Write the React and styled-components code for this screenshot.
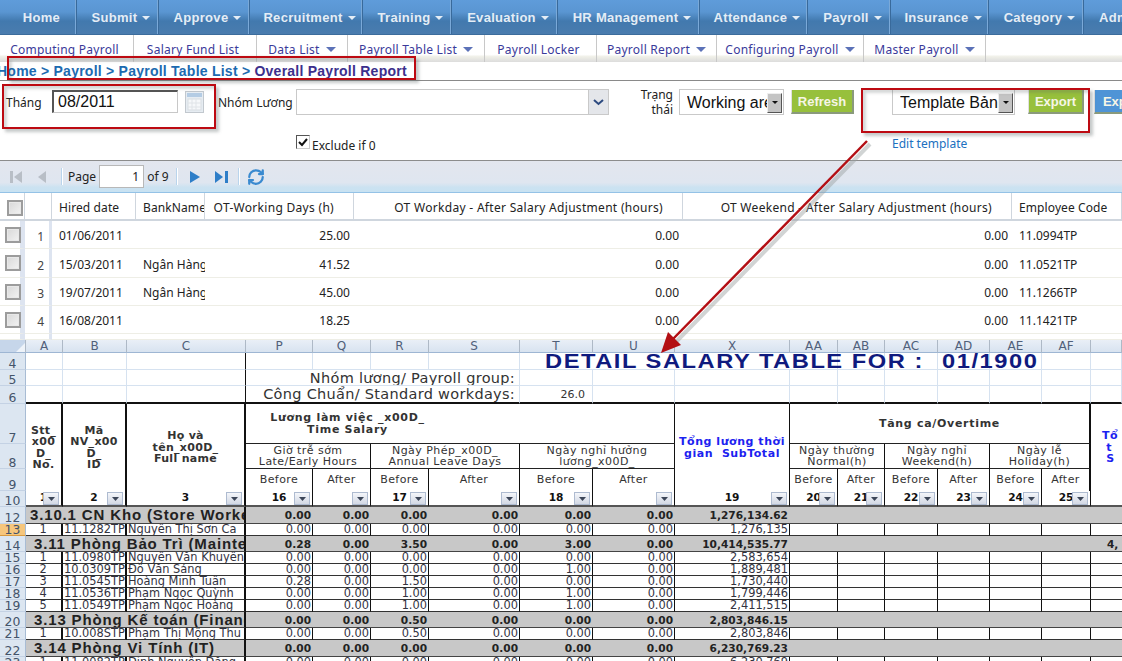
import React from "react";
import styled, { createGlobalStyle } from "styled-components";
import { RefreshCw } from "lucide-react";

const GlobalStyle = createGlobalStyle`
    html, body {
        margin: 0;
        padding: 0;
        background: #fff;
        overflow: hidden;
    }
    #root {
        width: 1122px;
        height: 661px;
    }
`;

const UI_FONT = `"Noto Sans", "Liberation Sans", sans-serif`;
const SHEET_FONT = `"DejaVu Sans", "Liberation Sans", sans-serif`;

const Page = styled.div`
    position: relative;
    width: 1122px;
    height: 661px;
    overflow: hidden;
    font-family: ${UI_FONT};
    font-size: 12px;
    color: #222;
`;

/////// top menus ///////
const Nav = styled.div`
    display: flex;
    height: 35px;
    overflow: hidden;
    background: linear-gradient(#5f9cda 0%, #5a96d2 35%, #4279ae 62%, #4a7cae 100%);
    border-bottom: 1px solid #3c6c9c;
    box-sizing: border-box;
`;

const NavItem = styled.div`
    flex: none;
    width: ${(p) => p.$w}px;
    box-sizing: border-box;
    display: flex;
    align-items: center;
    justify-content: center;
    gap: 5px;
    padding: 1px 0 0 7px;
    color: #e4edf6;
    font-family: "Liberation Sans", sans-serif;
    font-weight: bold;
    font-size: 13px;
    letter-spacing: 0.3px;
    white-space: nowrap;
    border-right: 1px solid #396a9b;
    box-shadow: inset -1px 0 0 #7aa9d8;
`;

const Caret = styled.i`
    display: block;
    width: 0;
    height: 0;
    border-left: ${(p) => p.$s || 4}px solid transparent;
    border-right: ${(p) => p.$s || 4}px solid transparent;
    border-top: ${(p) => p.$s || 4}px solid ${(p) => p.$c || "#e4edf6"};
`;

const SubNav = styled.div`
    display: flex;
    height: 27px;
    background: linear-gradient(#fff 0%, #fff 72%, #f0f0e8 80%, #dcdcdc 100%);
`;

const SubItem = styled.div`
    flex: none;
    width: ${(p) => p.$w}px;
    box-sizing: border-box;
    display: flex;
    align-items: center;
    justify-content: center;
    gap: 6px;
    padding: 1px ${(p) => (p.$menu ? 0 : 4)}px 0 0;
    color: #3a3a9a;
    font-size: 12px;
    letter-spacing: 0.25px;
    white-space: nowrap;
    border-right: 1px solid #c8c8c8;
`;

const Crumbs = styled.div`
    height: 18px;
    display: flex;
    align-items: center;
    margin-left: -3px;
    font-family: "Liberation Sans", sans-serif;
    font-weight: bold;
    font-size: 14px;
    letter-spacing: 0.24px;
    color: #1c6ab0;
    white-space: pre;
    border-bottom: 1px solid #8a8a8a;
    & b { color: #3c2f8c; }
`;

/////// filters ///////
const Filters = styled.div`
    height: 79px;
    border-bottom: 1px solid #8c8c8c;
    box-sizing: content-box;
`;

const FilterRow = styled.div`
    display: flex;
    align-items: flex-start;
    padding-top: 9px;
    height: 44px;
    box-sizing: border-box;
`;

const FilterLabel = styled.div`
    flex: none;
    width: ${(p) => p.$w}px;
    margin-left: ${(p) => p.$ml || 0}px;
    padding-top: 4px;
    white-space: nowrap;
    color: #222;
`;

const DateInput = styled.input`
    flex: none;
    width: 126px;
    height: 23px;
    box-sizing: border-box;
    padding: 0 4px;
    border: 1px solid #c8c8c8;
    border-top: 2px solid #555;
    border-left: 2px solid #555;
    font-family: "Liberation Sans", sans-serif;
    font-size: 16px;
    color: #111;
    outline: none;
`;

const CalendarIcon = styled.svg`
    flex: none;
    margin: 0 0 0 7px;
    display: block;
`;

const GroupSelect = styled.div`
    flex: none;
    width: 313px;
    height: 26px;
    margin-top: -1px;
    box-sizing: border-box;
    border: 1px solid #c9c9c9;
    display: flex;
    justify-content: flex-end;
`;

const GroupArrow = styled.div`
    width: 19px;
    background: #e4e6ea;
    border-left: 1px solid #c9c9c9;
    display: flex;
    align-items: center;
    justify-content: center;
`;

const StateLabel = styled.div`
    flex: none;
    width: 64px;
    box-sizing: border-box;
    padding-left: 24px;
    margin-top: -3px;
    text-align: right;
    line-height: 15px;
    font-size: 12px;
    color: #222;
`;

const PickSelect = styled.div`
    flex: none;
    width: ${(p) => p.$w}px;
    height: 26px;
    margin-left: ${(p) => p.$ml}px;
    margin-top: -1px;
    box-sizing: border-box;
    border: 1px solid #c9c9c9;
    display: flex;
    align-items: center;
    font-family: "Liberation Sans", sans-serif;
    font-size: 16px;
    color: #111;
    padding: 1px 0 0 7px;
    overflow: hidden;
    white-space: nowrap;
    position: relative;
`;

const PickText = styled.span`
    flex: 1;
    overflow: hidden;
    min-width: 0;
`;

const PickArrow = styled.span`
    flex: none;
    width: 15px;
    height: 20px;
    margin-right: 1px;
    background: #c4c4c4;
    border: 1px solid;
    border-color: #eee #555 #555 #eee;
    box-sizing: border-box;
    display: flex;
    align-items: center;
    justify-content: center;
`;

const ActionButton = styled.div`
    flex: none;
    width: ${(p) => p.$w}px;
    height: 24px;
    margin-left: ${(p) => p.$ml}px;
    box-sizing: border-box;
    background: ${(p) => p.$bg || "#97c03c"};
    color: #f6f6e6;
    font-family: "Liberation Sans", sans-serif;
    font-weight: bold;
    font-size: 13px;
    display: flex;
    align-items: center;
    justify-content: center;
    border-right: 2px solid #8a9a7c;
    border-bottom: 2px solid #8a9a7c;
    border-left: 1px solid #e0e0e0;
    white-space: nowrap;
`;

const SecondRow = styled.div`
    display: flex;
    height: 35px;
    align-items: flex-start;
`;

const ExcludeLabel = styled.label`
    flex: none;
    width: 596px;
    margin-left: 296px;
    margin-top: 13px;
    display: flex;
    align-items: flex-end;
    gap: 2px;
    color: #222;
    font-size: 12px;
    line-height: 13px;
`;

const CheckMark = styled.span`
    flex: none;
    width: 14px;
    height: 14px;
    box-sizing: border-box;
    border: 1px solid;
    border-color: #555 #ccc #ccc #555;
    display: flex;
    align-items: center;
    justify-content: center;
    position: relative;
    top: -3px;
`;

const EditLink = styled.a`
    margin-top: 10px;
    color: #2070c0;
    font-size: 12px;
    white-space: nowrap;
`;

/////// pager ///////
const Pager = styled.div`
    height: 32px;
    box-sizing: border-box;
    display: flex;
    align-items: center;
    background: linear-gradient(#e3e6ee 0%, #dfe6f0 70%, #cbe2f1 85%, #c8e2f2 100%);
    border-bottom: 1px solid #94c2e6;
`;

const PagerSep = styled.i`
    flex: none;
    display: block;
    width: 1px;
    height: 17px;
    margin: 0 ${(p) => p.$r || 6}px 0 ${(p) => p.$l || 0}px;
    background: #b9d4ec;
    box-shadow: 1px 0 0 #fff;
`;

const PagerIcon = styled.svg`
    flex: none;
    display: block;
    margin-left: ${(p) => p.$ml || 0}px;
`;

const PageInput = styled.input`
    flex: none;
    width: 45px;
    height: 23px;
    margin: 0 3px;
    box-sizing: border-box;
    border: 1px solid #b8b8b8;
    text-align: right;
    padding: 0 4px;
    font-family: ${UI_FONT};
    font-size: 12px;
    color: #222;
    outline: none;
`;

/////// list grid ///////
const Grid = styled.table`
    width: 1122px;
    table-layout: fixed;
    border-collapse: separate;
    border-spacing: 0;
    font-size: 12px;
`;

const Th = styled.th`
    height: 28px;
    box-sizing: border-box;
    padding: 3px ${(p) => (p.$right ? 19 : 0)}px 0 ${(p) => (p.$left ? 7 : 0)}px;
    font-weight: normal;
    text-align: ${(p) => (p.$right ? "right" : p.$left ? "left" : "center")};
    letter-spacing: ${(p) => (p.$right ? 0.3 : 0.1)}px;
    white-space: nowrap;
    overflow: hidden;
    color: #222;
    background: #fff;
    border-right: 1px solid #cfd6de;
    border-bottom: 2px solid #cfd6de;
`;

const Td = styled.td`
    height: ${(p) => p.$h || 28}px;
    box-sizing: border-box;
    padding: 2px ${(p) => (p.$right ? 4 : 0)}px 0 ${(p) => (p.$right ? 0 : 7)}px;
    text-align: ${(p) => (p.$right ? "right" : "left")};
    white-space: nowrap;
    overflow: hidden;
    color: #222;
    border-bottom: 1px solid #eeeee6;
`;

const MarkTd = styled.td`
    height: ${(p) => p.$h || 28}px;
    box-sizing: border-box;
    padding: 0 ${(p) => (p.$num ? 5 : 0)}px ${(p) => (p.$num ? 3 : 0)}px ${(p) => (p.$num ? 0 : 5)}px;
    text-align: ${(p) => (p.$num ? "right" : "left")};
    vertical-align: ${(p) => (p.$num ? "bottom" : "middle")};
    border-right: ${(p) => (p.$num ? 3 : 5)}px solid #dde4f0;
    border-bottom: 1px solid #eeeee6;
    color: #444;
`;

const GridBox = styled.span`
    display: block;
    width: 16px;
    height: 16px;
    box-sizing: border-box;
    border: 2px solid #9c9c9c;
    background: linear-gradient(135deg, #d8d8d8, #f2f2f2);
    box-shadow: inset 0 0 0 1px #e8e8e8;
`;

/////// excel part ///////
const Sheet = styled.table`
    width: 1122px;
    table-layout: fixed;
    border-collapse: separate;
    border-spacing: 0;
    font-family: ${SHEET_FONT};
    font-size: 11px;
    color: #222;
`;

const ColHead = styled.th`
    height: 13px;
    box-sizing: border-box;
    padding: 0;
    font-weight: normal;
    font-size: 12px;
    line-height: 12px;
    color: #50607a;
    background: linear-gradient(#e9eff7, #d8e3f0);
    border-right: 1px solid #aeb9c6;
    border-bottom: 1px solid #9eb6d3;
    overflow: hidden;
`;

const CornerHead = styled(ColHead)`
    background: #c6d6ea;
    text-align: right;
    vertical-align: bottom;
    line-height: 0;
`;

const RowHead = styled.td`
    height: ${(p) => p.$h}px;
    box-sizing: border-box;
    padding: 0;
    text-align: center;
    vertical-align: bottom;
    font-size: 12.4px;
    line-height: 11px;
    color: #44546a;
    background: ${(p) => (p.$on ? "#f6c67c" : "#dce6f1")};
    border-bottom: 1px solid ${(p) => (p.$on ? "#d89a40" : "#c4d2e4")};
    border-right: 1px solid #a8bcd4;
    overflow: hidden;
`;

const Blank = styled.td`
    height: ${(p) => p.$h}px;
    box-sizing: border-box;
    padding: 0 ${(p) => p.$pr || 0}px 0 0;
    text-align: right;
    font-size: 14.5px;
    letter-spacing: 0.3px;
    line-height: 14px;
    white-space: nowrap;
    color: #333;
    border-right: ${(p) => (p.$open ? "0" : `1px solid ${p.$dark ? "#111" : "#d6e2f0"}`)};
    border-bottom: ${(p) => (p.$heavy ? "2px solid #111" : "1px solid #d6e2f0")};
    overflow: ${(p) => (p.$over ? "visible" : "hidden")};
`;

const SmallValue = styled.span`
    font-size: 11px;
    letter-spacing: 0;
`;

const Title = styled.div`
    width: 0;
    margin-left: 25px;
    font-family: "Liberation Sans", sans-serif;
    font-weight: bold;
    font-size: 19.5px;
    line-height: 16px;
    letter-spacing: 1.25px;
    text-align: left;
    color: #0f1a7e;
    white-space: pre;
    transform: scaleX(1.215);
    transform-origin: 0 0;
    & span { margin-left: 15px; }
`;

const Head = styled.td`
    box-sizing: border-box;
    height: ${(p) => p.$h}px;
    padding: 0 ${(p) => p.$pr || 0}px 0 0;
    text-align: center;
    vertical-align: middle;
    font-size: ${(p) => p.$fs || 11}px;
    letter-spacing: ${(p) => p.$ls ?? 0.45}px;
    font-weight: ${(p) => (p.$bold ? "bold" : "normal")};
    line-height: ${(p) => p.$lh || 11.5}px;
    color: ${(p) => p.$color || "#333"};
    white-space: nowrap;
    overflow: hidden;
    border-right: ${(p) => p.$rw ?? 1}px solid #111;
    border-bottom: ${(p) => p.$bw ?? 1}px solid #222;
`;

const Sort = styled.td`
    box-sizing: border-box;
    height: 16px;
    padding: 0;
    overflow: hidden;
    border-right: ${(p) => p.$rw ?? 1}px solid #111;
    border-bottom: 2px solid #555;
`;

const SortInner = styled.div`
    position: relative;
    height: 14px;
    line-height: 13px;
    font-size: 10.6px;
    font-weight: bold;
    color: #111;
    text-align: center;
    white-space: nowrap;
`;

// filter button lies over the number, like in the excel shot
const SortBtn = styled.span`
    position: absolute;
    right: 2px;
    top: 1px;
    width: 16px;
    height: 13px;
    box-sizing: border-box;
    border: 1px solid #aebbd0;
    background: linear-gradient(#f4f6fa, #d2d8e4);
    display: flex;
    align-items: center;
    justify-content: center;
`;

const Cell = styled.td`
    box-sizing: border-box;
    height: ${(p) => p.$h}px;
    padding: 0 ${(p) => (p.$align === "right" ? 2 : 1)}px 0 ${(p) => (p.$align === "left" ? 1 : 0)}px;
    text-align: ${(p) => p.$align || "right"};
    white-space: nowrap;
    overflow: hidden;
    font-size: 11.4px;
    line-height: 11px;
    color: #33333f;
    border-right: ${(p) => p.$rw ?? 1}px solid #111;
    border-bottom: 1px solid #333;
`;

const GroupCell = styled.td`
    box-sizing: border-box;
    height: ${(p) => p.$h}px;
    padding: 0 ${(p) => (p.$name ? 0 : 2)}px 0 ${(p) => p.$pl || 0}px;
    text-align: ${(p) => (p.$name || p.$pl ? "left" : "right")};
    white-space: nowrap;
    overflow: hidden;
    font-family: ${(p) => (p.$name ? `"Liberation Sans", sans-serif` : SHEET_FONT)};
    font-weight: bold;
    font-size: ${(p) => (p.$name ? 15 : 10.6)}px;
    letter-spacing: ${(p) => (p.$name ? "0.85px" : "0")};
    line-height: 14px;
    color: #222;
    background: #c8c8c8;
    border-right: ${(p) => (p.$name ? "2px solid #111" : "0")};
    border-bottom: 1px solid #444;
`;

const Tail = styled.div`
    text-align: left;
    padding-left: 11px;
`;

/////// hand drawn annotations, they sit on top of the page ///////
const RedBox = styled.div`
    position: absolute;
    left: ${(p) => p.$x}px;
    top: ${(p) => p.$y}px;
    width: ${(p) => p.$w}px;
    height: ${(p) => p.$h}px;
    box-sizing: border-box;
    border: 2px solid #bd0a12;
    box-shadow: 3px 3px 3px rgba(90, 100, 100, 0.35), inset 3px 3px 3px rgba(90, 100, 100, 0.25);
    pointer-events: none;
`;

const ArrowLayer = styled.svg`
    position: absolute;
    left: 0;
    top: 0;
    pointer-events: none;
`;

const navItems = [
    ["Home", 77, false],
    ["Submit", 82, true],
    ["Approve", 91, true],
    ["Recruitment", 113, true],
    ["Training", 89, true],
    ["Evaluation", 106, true],
    ["HR Management", 142, true],
    ["Attendance", 108, true],
    ["Payroll", 83, true],
    ["Insurance", 98, true],
    ["Category", 95, true],
    ["Administration", 120, false],
];

const subItems = [
    ["Computing Payroll", 134, false],
    ["Salary Fund List", 123, false],
    ["Data List", 91, true],
    ["Payroll Table List", 137, true],
    ["Payroll Locker", 112, false],
    ["Payroll Report", 120, true],
    ["Configuring Payroll", 147, true],
    ["Master Payroll", 122, true],
];

const gridRows = [
    [1, "01/06/2011", "", "25.00", "0.00", "0.00", "11.0994TP", 28],
    [2, "15/03/2011", "Ngân Hàng Á Châu", "41.52", "0.00", "0.00", "11.0521TP", 29],
    [3, "19/07/2011", "Ngân Hàng Á Châu", "45.00", "0.00", "0.00", "11.1266TP", 28],
    [4, "16/08/2011", "", "18.25", "0.00", "0.00", "11.1421TP", 28],
];

const sheetCols = [26, 37, 64, 119, 67, 58, 58, 91, 73, 82, 115, 48, 47, 53, 52, 52, 49, 31];
const sheetLetters = ["A", "B", "C", "P", "Q", "R", "S", "T", "U", "X", "AA", "AB", "AC", "AD", "AE", "AF", ""];

const rows = [
    { n: 12, h: 17, pl: 4, name: "3.10.1 CN Kho (Store Workers)", v: ["0.00", "0.00", "0.00", "0.00", "0.00", "0.00", "1,276,134.62"] },
    { n: 13, h: 12, on: true, a: "1", b: "11.1282TP", c: "Nguyễn Thị Sơn Ca", v: ["0.00", "0.00", "0.00", "0.00", "0.00", "0.00", "1,276,135"] },
    { n: 14, h: 16, pl: 8, name: "3.11 Phòng Bảo Trì (Maintenance)", v: ["0.28", "0.00", "3.50", "0.00", "3.00", "0.00", "10,414,535.77"], last: "4," },
    { n: 15, h: 12, a: "1", b: "11.0980TP", c: "Nguyễn Văn Khuyến", v: ["0.00", "0.00", "0.00", "0.00", "0.00", "0.00", "2,583,654"] },
    { n: 16, h: 12, a: "2", b: "10.0309TP", c: "Đỗ Văn Sáng", v: ["0.00", "0.00", "0.00", "0.00", "1.00", "0.00", "1,889,481"] },
    { n: 17, h: 12, a: "3", b: "11.0545TP", c: "Hoàng Minh Tuấn", v: ["0.28", "0.00", "1.50", "0.00", "0.00", "0.00", "1,730,440"] },
    { n: 18, h: 12, a: "4", b: "11.0536TP", c: "Phạm Ngọc Quỳnh", v: ["0.00", "0.00", "1.00", "0.00", "1.00", "0.00", "1,799,446"] },
    { n: 19, h: 12, a: "5", b: "11.0549TP", c: "Phạm Ngọc Hoàng", v: ["0.00", "0.00", "1.00", "0.00", "1.00", "0.00", "2,411,515"] },
    { n: 20, h: 16, pl: 8, name: "3.13 Phòng Kế toán (Finance)", v: ["0.00", "0.00", "0.50", "0.00", "0.00", "0.00", "2,803,846.15"] },
    { n: 21, h: 12, a: "1", b: "10.008STP", c: "Phạm Thị Mộng Thu", v: ["0.00", "0.00", "0.50", "0.00", "0.00", "0.00", "2,803,846"] },
    { n: 22, h: 17, pl: 8, name: "3.14 Phòng Vi Tính (IT)", v: ["0.00", "0.00", "0.00", "0.00", "0.00", "0.00", "6,230,769.23"] },
    { n: 23, h: 12, a: "1", b: "11.0082TP", c: "Đinh Nguyễn Đăng", v: ["0.00", "0.00", "0.00", "0.00", "0.00", "0.00", "6,230,769"] },
];

const sorts = ["1", "2", "3", "16", "", "17", "", "18", "", "19", "20", "21", "22", "23", "24", "25"];
const beforeAfter = ["Before", "After", "Before", "After", "Before", "After"];
const plainCols = [0, 1, 2, 3, 4, 5, 6];

const Dn = () => (
    <svg width="7" height="4" viewBox="0 0 7 4"><path d="M0 0h7L3.5 4z" fill="#3c4658" /></svg>
);

const SheetPart = () => (
    <Sheet>
        <colgroup>
            {sheetCols.map((w, i) => <col key={i} style={{ width: w }} />)}
        </colgroup>
        <tbody>
            <tr>
                <CornerHead>
                    <svg width="9" height="9" viewBox="0 0 9 9"><path d="M9 0v9H0z" fill="#eef3f9" /></svg>
                </CornerHead>
                {sheetLetters.map((l, i) => <ColHead key={i}>{l}</ColHead>)}
            </tr>
            <tr>
                <RowHead $h={17}>4</RowHead>
                <Blank $h={17} /><Blank $h={17} /><Blank $h={17} $dark />
                <Blank $h={17} /><Blank $h={17} /><Blank $h={17} /><Blank $h={17} />
                <Blank $h={17} $over $open>
                    <Title>DETAIL SALARY TABLE FOR :<span>01/1900</span></Title>
                </Blank>
                <Blank $h={17} $open /><Blank $h={17} $open />
                {plainCols.map((i) => <Blank key={i} $h={17} />)}
            </tr>
            <tr>
                <RowHead $h={16}>5</RowHead>
                <Blank $h={16} /><Blank $h={16} /><Blank $h={16} $dark />
                <Blank $h={16} colSpan={4} $pr={4}>Nhóm lương/ Payroll group:</Blank>
                <Blank $h={16} /><Blank $h={16} /><Blank $h={16} />
                {plainCols.map((i) => <Blank key={i} $h={16} />)}
            </tr>
            <tr>
                <RowHead $h={18}>6</RowHead>
                <Blank $h={18} $heavy /><Blank $h={18} $heavy /><Blank $h={18} $heavy $dark />
                <Blank $h={18} $heavy colSpan={4} $pr={4}>Công Chuẩn/ Standard workdays:</Blank>
                <Blank $h={18} $heavy $pr={7}><SmallValue>26.0</SmallValue></Blank>
                <Blank $h={18} $heavy /><Blank $h={18} $heavy />
                {plainCols.map((i) => <Blank key={i} $h={18} $heavy />)}
            </tr>
            <tr>
                <RowHead $h={40}>7</RowHead>
                <Head $h={40} rowSpan={3} $bold $rw={2} $bw={0} $lh={11.5} $ls={0.3}>Stt_<br />x00<br />D_<br />No.</Head>
                <Head $h={40} rowSpan={3} $bold $rw={2} $bw={0} $lh={11.5} $ls={0.3}>Mã<br />NV_x00<br />D_<br />ID</Head>
                <Head $h={40} rowSpan={3} $bold $rw={2} $bw={0} $lh={11.5} $ls={0.3}>Họ và<br />tên_x00D_<br />Full name</Head>
                <Head $h={40} colSpan={6} $bold $ls={0.7} $pr={225}>Lương làm việc _x00D_<br />Time Salary</Head>
                <Head $h={40} rowSpan={3} $bold $bw={0} $color="#1c22f0" $ls={0.55}>Tổng lương thời<br />gian&nbsp; SubTotal</Head>
                <Head $h={40} colSpan={6} $bold $ls={0.7} $rw={2}>Tăng ca/Overtime</Head>
                <Head $h={40} rowSpan={3} $bold $bw={0} $rw={0} $color="#1c22f0">
                    <Tail>Tổ<br />&nbsp;t<br />&nbsp;S</Tail>
                </Head>
            </tr>
            <tr>
                <RowHead $h={25}>8</RowHead>
                <Head $h={25} colSpan={2}>Giờ trễ sớm<br />Late/Early Hours</Head>
                <Head $h={25} colSpan={2}>Ngày Phép_x00D_<br />Annual Leave Days</Head>
                <Head $h={25} colSpan={2}>Ngày nghỉ hưởng<br />lương_x00D_</Head>
                <Head $h={25} colSpan={2}>Ngày thường<br />Normal(h)</Head>
                <Head $h={25} colSpan={2}>Ngày nghỉ<br />Weekend(h)</Head>
                <Head $h={25} colSpan={2} $rw={2}>Ngày lễ<br />Holiday(h)</Head>
            </tr>
            <tr>
                <RowHead $h={22}>9</RowHead>
                {beforeAfter.map((t, i) => <Head key={i} $h={22} $bw={0}>{t}</Head>)}
                {beforeAfter.map((t, i) => <Head key={i} $h={22} $bw={0} $rw={i === 5 ? 2 : 1}>{t}</Head>)}
            </tr>
            <tr>
                <RowHead $h={16}>10</RowHead>
                {sorts.map((t, i) => (
                    <Sort key={i} $rw={i < 3 ? 2 : 1}>
                        <SortInner>{t}<SortBtn><Dn /></SortBtn></SortInner>
                    </Sort>
                ))}
                <Sort $rw={0} />
            </tr>
            {rows.map((r) => (
                <tr key={r.n}>
                    <RowHead $h={r.h} $on={r.on}>{r.n}</RowHead>
                    {r.name ? (
                        <>
                            <GroupCell $h={r.h} $name $pl={r.pl} colSpan={3}>{r.name}</GroupCell>
                            {r.v.map((x, i) => <GroupCell key={i} $h={r.h}>{x}</GroupCell>)}
                            {[0, 1, 2, 3, 4, 5].map((i) => <GroupCell key={i} $h={r.h} />)}
                            <GroupCell $h={r.h} $pl={16}>{r.last}</GroupCell>
                        </>
                    ) : (
                        <>
                            <Cell $h={r.h} $align="center" $rw={2}>{r.a}</Cell>
                            <Cell $h={r.h} $align="left" $rw={2}>{r.b}</Cell>
                            <Cell $h={r.h} $align="left" $rw={2}>{r.c}</Cell>
                            {r.v.map((x, i) => <Cell key={i} $h={r.h}>{x}</Cell>)}
                            {[0, 1, 2, 3, 4, 5].map((i) => <Cell key={i} $h={r.h} />)}
                            <Cell $h={r.h} $rw={0} />
                        </>
                    )}
                </tr>
            ))}
        </tbody>
    </Sheet>
);

const App = () => (
    <Page>
        <GlobalStyle />
        <Nav>
            {navItems.map(([t, w, c]) => (
                <NavItem key={t} $w={w}>{t}{c && <Caret />}</NavItem>
            ))}
        </Nav>
        <SubNav>
            {subItems.map(([t, w, c]) => (
                <SubItem key={t} $w={w} $menu={c}>{t}{c && <Caret $s={5} $c="#5c72b8" />}</SubItem>
            ))}
        </SubNav>
        <Crumbs>Home &gt; Payroll &gt; Payroll Table List &gt; <b>Overall Payroll Report</b></Crumbs>
        <Filters>
            <FilterRow>
                <FilterLabel $w={46} $ml={6}>Tháng</FilterLabel>
                <DateInput defaultValue="08/2011" />
                <CalendarIcon width="19" height="24" viewBox="0 0 19 24">
                    <rect x="0.5" y="1.5" width="18" height="21" fill="#e6ecf2" stroke="#c2c8ce" />
                    <rect x="2" y="3" width="15" height="4" fill="#b4cce4" />
                    <rect x="3" y="9" width="13" height="11" fill="#f6f8fa" stroke="#d8dde2" />
                    <path d="M7 9v11M11 9v11M3 13h13M3 17h13" stroke="#e0e4e8" />
                </CalendarIcon>
                <FilterLabel $w={78} $ml={14}>Nhóm Lương</FilterLabel>
                <GroupSelect>
                    <GroupArrow>
                        <svg width="11" height="7" viewBox="0 0 11 7"><path d="M1 1l4.5 4L10 1" fill="none" stroke="#2c4a80" strokeWidth="2" /></svg>
                    </GroupArrow>
                </GroupSelect>
                <StateLabel>Trạng thái</StateLabel>
                <PickSelect $w={105} $ml={6}>
                    <PickText>Working area</PickText>
                    <PickArrow><Caret $s={3} $c="#111" /></PickArrow>
                </PickSelect>
                <ActionButton $w={63} $ml={7}>Refresh</ActionButton>
                <PickSelect $w={123} $ml={38}>
                    <PickText>Template Bảng</PickText>
                    <PickArrow><Caret $s={3} $c="#111" /></PickArrow>
                </PickSelect>
                <ActionButton $w={56} $ml={13}>Export</ActionButton>
                <ActionButton $w={60} $ml={10} $bg="#4f94d6">Export</ActionButton>
            </FilterRow>
            <SecondRow>
                <ExcludeLabel>
                    <CheckMark>
                        <svg width="10" height="9" viewBox="0 0 10 9"><path d="M1 4l3 3 5-6" fill="none" stroke="#111" strokeWidth="2" /></svg>
                    </CheckMark>
                    Exclude if 0
                </ExcludeLabel>
                <EditLink>Edit template</EditLink>
            </SecondRow>
        </Filters>
        <Pager>
            <PagerIcon $ml={10} width="13" height="14" viewBox="0 0 13 14">
                <rect x="0" y="1" width="3" height="12" fill="#b8bec6" />
                <path d="M12 1v12L4 7z" fill="#b8bec6" />
            </PagerIcon>
            <PagerIcon $ml={15} width="8" height="14" viewBox="0 0 8 14"><path d="M8 1v12L0 7z" fill="#b8bec6" /></PagerIcon>
            <PagerSep $l={15} />
            <span>Page</span>
            <PageInput defaultValue="1" />
            <span>of 9</span>
            <PagerSep $l={7} />
            <PagerIcon $ml={7} width="10" height="14" viewBox="0 0 10 14"><path d="M0 1v12l10-6z" fill="#2e7ec8" /></PagerIcon>
            <PagerIcon $ml={15} width="13" height="14" viewBox="0 0 13 14">
                <path d="M0 1v12l8-6z" fill="#2e7ec8" />
                <rect x="10" y="1" width="3" height="12" fill="#2e7ec8" />
            </PagerIcon>
            <PagerSep $l={10} />
            <PagerIcon as={RefreshCw} $ml={2} size={18} color="#3a8ad0" strokeWidth={3} />
        </Pager>
        <Grid>
            <colgroup>
                {[25, 27, 84, 69, 149, 329, 329, 110].map((w, i) => <col key={i} style={{ width: w }} />)}
            </colgroup>
            <thead>
                <tr>
                    <Th $left><GridBox /></Th>
                    <Th />
                    <Th $left>Hired date</Th>
                    <Th $left>BankName</Th>
                    <Th $right>OT-Working Days (h)</Th>
                    <Th $right>OT Workday - After Salary Adjustment (hours)</Th>
                    <Th $right>OT Weekend - After Salary Adjustment (hours)</Th>
                    <Th $left>Employee Code</Th>
                </tr>
            </thead>
            <tbody>
                {gridRows.map(([n, d, b, a, w, e, c, h]) => (
                    <tr key={n}>
                        <MarkTd $h={h}><GridBox /></MarkTd>
                        <MarkTd $h={h} $num>{n}</MarkTd>
                        <Td $h={h}>{d}</Td>
                        <Td $h={h}>{b}</Td>
                        <Td $h={h} $right>{a}</Td>
                        <Td $h={h} $right>{w}</Td>
                        <Td $h={h} $right>{e}</Td>
                        <Td $h={h}>{c}</Td>
                    </tr>
                ))}
                <tr>
                    <MarkTd $h={6} />
                    <MarkTd $h={6} $num />
                    <Td $h={6} colSpan={6} />
                </tr>
            </tbody>
        </Grid>
        <SheetPart />

        <RedBox $x={7} $y={56} $w={409} $h={24} />
        <RedBox $x={2} $y={84} $w={214} $h={45} />
        <RedBox $x={861} $y={88} $w={229} $h={45} />
        <ArrowLayer width="1122" height="661" viewBox="0 0 1122 661">
            <path d="M870 144 L671 347" stroke="#9aa0a0" strokeOpacity="0.45" strokeWidth="4" fill="none" />
            <path d="M867 141 L673 339" stroke="#b30f14" strokeWidth="2.5" fill="none" />
            <path d="M661 353 L668 332 L681 345 Z" fill="#b30f14" />
        </ArrowLayer>
    </Page>
);

export default App;
